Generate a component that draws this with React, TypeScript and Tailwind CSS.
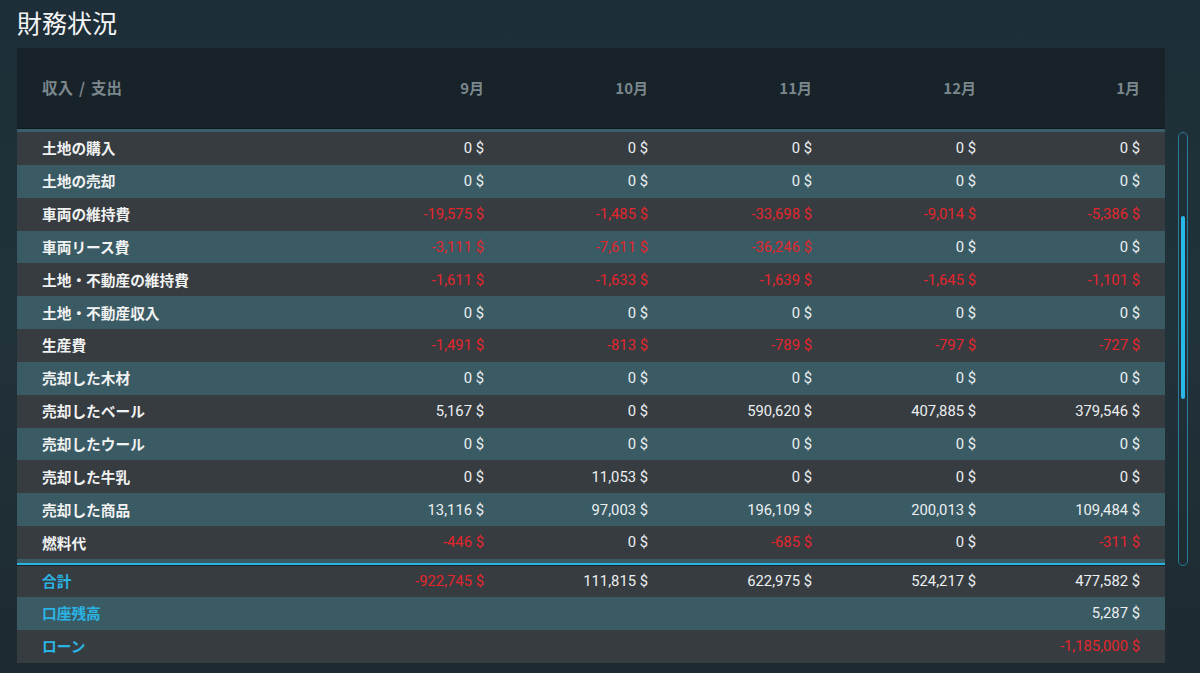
import React from "react"

type Row = {
  label: string
  values: number[]
}

const months = ["9月", "10月", "11月", "12月", "1月"]

const rows: Row[] = [
  { label: "土地の購入", values: [0, 0, 0, 0, 0] },
  { label: "土地の売却", values: [0, 0, 0, 0, 0] },
  { label: "車両の維持費", values: [-19575, -1485, -33698, -9014, -5386] },
  { label: "車両リース費", values: [-3111, -7611, -36246, 0, 0] },
  { label: "土地・不動産の維持費", values: [-1611, -1633, -1639, -1645, -1101] },
  { label: "土地・不動産収入", values: [0, 0, 0, 0, 0] },
  { label: "生産費", values: [-1491, -813, -789, -797, -727] },
  { label: "売却した木材", values: [0, 0, 0, 0, 0] },
  { label: "売却したベール", values: [5167, 0, 590620, 407885, 379546] },
  { label: "売却したウール", values: [0, 0, 0, 0, 0] },
  { label: "売却した牛乳", values: [0, 11053, 0, 0, 0] },
  { label: "売却した商品", values: [13116, 97003, 196109, 200013, 109484] },
  { label: "燃料代", values: [-446, 0, -685, 0, -311] },
]

const totals = [-922745, 111815, 622975, 524217, 477582]

const fmt = (n: number) => `${n < 0 ? "-" : ""}${Math.abs(n).toLocaleString("en-US")} $`

function Money({ value }: { value: number | null }) {
  if (value === null) return <div className="w-[164px]" />
  return (
    <div
      className={`w-[164px] text-right text-[14.8px] ${value < 0 ? "text-[#e3262b]" : "text-[#eceff0]"}`}
      style={{ fontFamily: "Roboto, 'Noto Sans', sans-serif" }}
    >
      {fmt(value)}
    </div>
  )
}

function TableRow({
  label,
  values,
  light,
  accent = false,
  height = "h-[32.85px]",
}: {
  label: string
  values: (number | null)[]
  light: boolean
  accent?: boolean
  height?: string
}) {
  return (
    <div className={`flex items-center ${height} ${light ? "bg-[#3a5a64]" : "bg-[#373c41]"}`}>
      <div
        className={`w-[303px] pl-[25px] text-[14.7px] font-bold ${accent ? "text-[#2ab4e4]" : "text-[#f1f2f2]"}`}
      >
        {label}
      </div>
      {values.map((v, i) => (
        <Money key={i} value={v} />
      ))}
    </div>
  )
}

export default function App() {
  return (
    <div
      className="w-[1200px] h-[673px] overflow-hidden bg-gradient-to-b from-[#1e2e38] via-[#22323a] to-[#1d2a30]"
      style={{ fontFamily: "'Noto Sans CJK JP', 'Noto Sans', sans-serif" }}
    >
      {/* Title */}
      <div className="h-[48px] pl-[17px] pt-[5px] text-[25px] leading-[34px] text-[#f3f4f4]">財務状況</div>

      <div className="flex pl-[17px]">
        {/* Panel */}
        <div className="w-[1148px]">
          {/* Header */}
          <div className="flex items-center h-[80px] bg-[#172229]">
            <div className="w-[303px] pl-[25px] text-[15.5px] font-bold text-[#7b878c]">
              <span>収入</span>
              <span className="mx-[6px]">/</span>
              <span>支出</span>
            </div>
            {months.map((m) => (
              <div key={m} className="w-[164px] text-right text-[15px] font-bold text-[#7b878c]">
                {m}
              </div>
            ))}
          </div>
          <div className="h-[4px] bg-[#3a5f6a] border-t border-[#10191e]" />

          {/* Rows */}
          {rows.map((r, i) => (
            <TableRow key={r.label} label={r.label} values={r.values} light={i % 2 === 1} />
          ))}

          {/* Separator */}
          <div className="h-[4px] bg-[#3a5a64]" />
          <div className="h-[2px] bg-[#2ab4e4]" />
          <div className="h-[1px] bg-[#1a2328]" />

          {/* Totals */}
          <TableRow label="合計" values={totals} light={false} accent height="h-[31px]" />
          <TableRow label="口座残高" values={[null, null, null, null, 5287]} light accent height="h-[33px]" />
          <TableRow label="ローン" values={[null, null, null, null, -1185000]} light={false} accent height="h-[33px]" />
        </div>

        {/* Scrollbar */}
        <div className="flex-1 pt-[84px] pl-[13px]">
          <div className="relative w-[10px] h-[434px] rounded-full border-[1.5px] border-[#2a7c98]">
            <div className="absolute left-[1.5px] top-[83px] w-[4px] h-[183px] rounded-full bg-[#29b6e8]" />
          </div>
        </div>
      </div>
    </div>
  )
}
